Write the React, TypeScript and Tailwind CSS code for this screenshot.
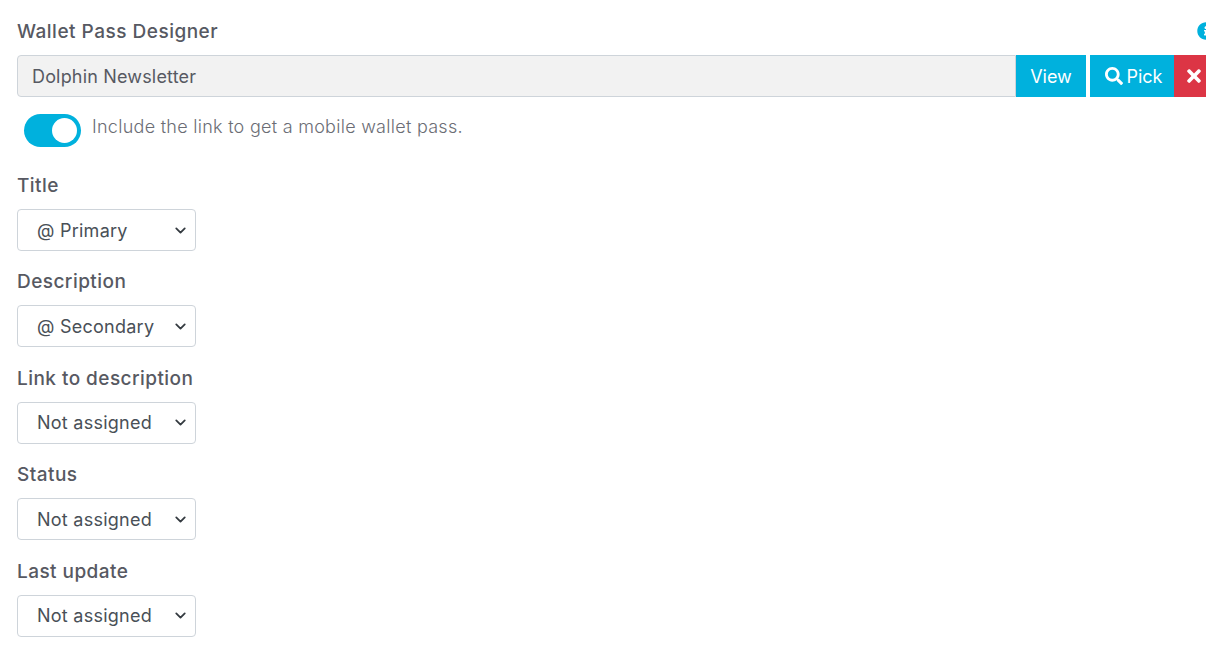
import React from "react";
import { FaSearch, FaTimes, FaInfoCircle } from "react-icons/fa";
import { ChevronDown } from "lucide-react";

const fields = [
  { label: "Title", value: "@ Primary" },
  { label: "Description", value: "@ Secondary" },
  { label: "Link to description", value: "Not assigned" },
  { label: "Status", value: "Not assigned" },
  { label: "Last update", value: "Not assigned" },
];

const App = () => {
  return (
    <div className="w-[1206px] h-[671px] overflow-hidden bg-white pl-[17px] pt-[19px] font-['Inter',sans-serif] text-[#575962]">
      <div className="w-[1197px]">
        <div className="flex items-center justify-between h-[24px]">
          <label className="pt-[2px] text-[19px] font-medium tracking-[0.5px]">Wallet Pass Designer</label>
          <FaInfoCircle className="text-[#00b1dd] text-[18px] mr-[-1px]" />
        </div>
        <div className="flex mt-[12px] h-[42px]">
          <div className="flex-1 flex items-center bg-[#f2f2f2] border border-[#ced4da] rounded-l pl-[14px] text-[18px] tracking-[0.17px]">
            Dolphin Newsletter
          </div>
          <button className="w-[70px] bg-[#00b1dd] text-white text-[18px]">View</button>
          <button className="ml-[4px] w-[84px] pl-[4px] bg-[#00b1dd] text-white text-[18px] flex items-center justify-center gap-[3px]">
            <FaSearch className="text-[18px]" />
            Pick
          </button>
          <button className="w-[40px] bg-[#dc3545] text-white flex items-center pl-[10px]">
            <FaTimes className="text-[20px]" />
          </button>
        </div>
        <div className="flex items-center mt-[16px] ml-[7px] h-[34px]">
          <div className="w-[57px] h-[33px] rounded-full bg-[#00b1dd] flex items-center justify-end pr-[4px]">
            <div className="w-[25px] h-[25px] rounded-full bg-white" />
          </div>
          <span className="ml-[11px] text-[18px] font-light tracking-[0.27px] text-[#6b6d75] mb-[7px]">
            Include the link to get a mobile wallet pass.
          </span>
        </div>
        <div className="flex flex-col gap-[19.4px] mt-[27px]">
          {fields.map((f) => (
            <div key={f.label}>
              <div className="text-[19px] font-medium tracking-[0.45px] h-[24px] leading-[24px]">{f.label}</div>
              <div className="mt-[11px] w-[179px] h-[42px] border border-[#ced4da] rounded flex items-center justify-between pl-[19px] pr-[6px] text-[18px] tracking-[0.25px] text-[#495057]">
                <span>{f.value}</span>
                <ChevronDown size={17} strokeWidth={2.5} className="text-[#343a40]" />
              </div>
            </div>
          ))}
        </div>
      </div>
    </div>
  );
};

export default App;
